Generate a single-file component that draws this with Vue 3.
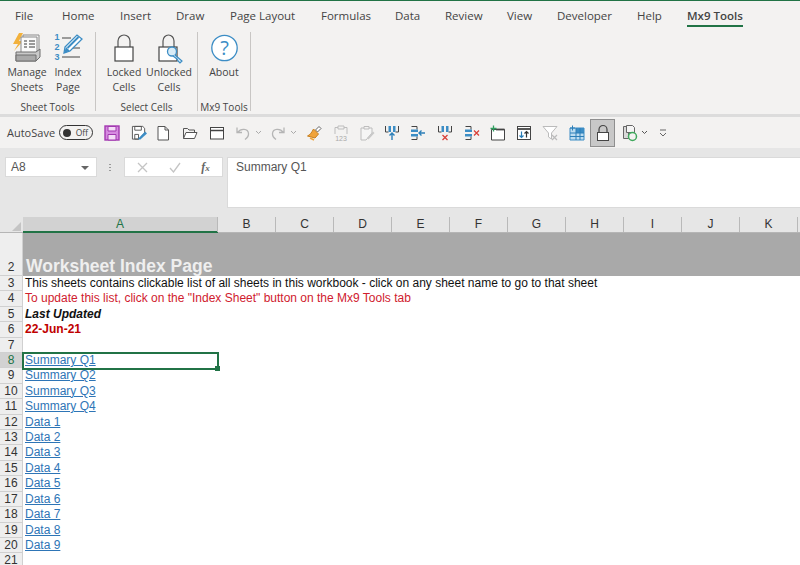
<template>
  <div class="excel">
    <!-- ribbon tabs -->
    <div class="tabs">
      <span v-for="t in tabs" :key="t" class="tab" :class="{ active: t === 'Mx9 Tools' }">{{ t }}</span>
    </div>

    <!-- ribbon -->
    <div class="ribbon">
      <div class="group g1">
        <div class="btns">
          <div class="big">
            <svg width="34" height="34" viewBox="0 0 34 34">
              <path d="M9 2 L3 13 L8 13 L4 20 L13 10 L9 10 L13 2Z" fill="#f2b13c" />
              <path d="M13 4h16v16H13z" fill="#f4f4f4" stroke="#8a8a8a" />
              <path d="M11 6h16v16H11z" fill="#fafafa" stroke="#8a8a8a" />
              <path d="M14 10h3M19 10h6M14 13h3M19 13h6M14 16h3M19 16h6" stroke="#7a7a7a" stroke-width="1.3" />
              <path d="M6 21h20l4-3v8l-4 4H6z" fill="#c9c9c9" stroke="#6e6e6e" />
              <path d="M6 24h20v6H6z" fill="#a9a9a9" stroke="#6e6e6e" />
            </svg>
            <span>Manage<br />Sheets</span>
          </div>
          <div class="big">
            <svg width="34" height="34" viewBox="0 0 34 34">
              <text x="3.500" y="9" class="num">1</text>
              <text x="3.500" y="19" class="num">2</text>
              <text x="3.500" y="29" class="num">3</text>
              <path d="M11 7h9M21 17h8M11 26h18" stroke="#444" stroke-width="1.100" />
              <path d="M14 16 L26 4 L31 8 L19 20 L13 22Z" fill="#fff" stroke="#3c8dc5" stroke-width="1.300" />
              <path d="M15 16 L13 22 L19 20Z" fill="#3c8dc5" />
              <path d="M16.500 17 L27.500 6" stroke="#3c8dc5" stroke-width="2" />
            </svg>
            <span>Index<br />Page</span>
          </div>
        </div>
        <div class="glabel">Sheet Tools</div>
      </div>

      <div class="group g2">
        <div class="btns">
          <div class="big lockb">
            <svg width="34" height="34" viewBox="0 0 34 34">
              <path d="M11 16 V10 a6 6 0 0 1 12 0 V16" fill="none" stroke="#555" stroke-width="1.200" />
              <rect x="8" y="16" width="18" height="14" fill="#fff" stroke="#444" stroke-width="1.200" />
            </svg>
            <span>Locked<br />Cells</span>
          </div>
          <div class="big lockb">
            <svg width="34" height="34" viewBox="0 0 34 34">
              <path d="M11 16 V10 a5.500 6 0 0 1 11 0 V16" fill="none" stroke="#555" stroke-width="1.200" />
              <rect x="7" y="16" width="18" height="14" fill="#fff" stroke="#444" stroke-width="1.200" />
              <circle cx="20" cy="20.500" r="4.500" fill="#d9ecf7" stroke="#3c8dc5" stroke-width="1.300" />
              <path d="M23 24 L30 30 L28 32 L26 30 L25 28 L21 25" fill="#d9ecf7" stroke="#3c8dc5" stroke-width="1.200" />
            </svg>
            <span>Unlocked<br />Cells</span>
          </div>
        </div>
        <div class="glabel">Select Cells</div>
      </div>

      <div class="group g3">
        <div class="btns">
          <div class="big about">
            <svg width="34" height="34" viewBox="0 0 34 34">
              <circle cx="17.500" cy="17" r="12.700" fill="#fff" stroke="#3c8dc5" stroke-width="1.300" />
              <text x="17.500" y="24" class="q">?</text>
            </svg>
            <span>About</span>
          </div>
        </div>
        <div class="glabel">Mx9 Tools</div>
      </div>
    </div>

    <!-- quick access toolbar -->
    <div class="qat">
      <span class="autosave">AutoSave</span>
      <span class="toggle"><i></i>Off</span>
      <div class="qicons">
        <!-- save -->
        <svg width="16" height="16" viewBox="0 0 16 16">
          <rect x="1" y="1" width="14" height="14" fill="#d68be0" stroke="#a238b0" stroke-width="1.400" />
          <path d="M4 1.500h8v4.500H4zM4 9.500h8V15H4z" fill="#f4dcf7" stroke="#a238b0" />
        </svg>
        <!-- save as -->
        <svg width="16" height="16" viewBox="0 0 17 17">
          <path d="M1.500 1.500h11l2 2v5l-6 6.500h-7z" fill="#fff" stroke="#555" />
          <path d="M4 1.500h7v4H4zM4 10h4v5H4z" fill="none" stroke="#555" />
          <path d="M8 14 L15 7 L17 9 L10 15.500 L8 15.500Z" fill="#3c8dc5" />
        </svg>
        <!-- new -->
        <svg width="16" height="16" viewBox="0 0 16 16">
          <path d="M3 1.500h7l3.500 3.500V15H3z" fill="#fff" stroke="#555" />
          <path d="M10 1.500V5h3.500" fill="none" stroke="#555" />
        </svg>
        <!-- open -->
        <svg width="16" height="16" viewBox="0 0 16 16">
          <path d="M1.500 13.500V3.500h4l1.500 1.500h5.500v2.500" fill="none" stroke="#555" />
          <path d="M1.500 13.500L4 7.500h11L12.500 13.500z" fill="#fff" stroke="#555" />
        </svg>
        <!-- folder tab -->
        <svg width="16" height="16" viewBox="0 0 16 16">
          <rect x="1.500" y="2.500" width="13" height="11.500" fill="#fff" stroke="#444" />
          <path d="M1.500 5.500h13" stroke="#444" stroke-width="1.500" />
        </svg>
        <!-- undo -->
        <svg width="16" height="16" viewBox="0 0 16 16">
          <path d="M2 2.500v5h5M2.500 7.500 C6 3 13 3.500 13.500 8.500 C13.800 11 12 13 10 14.500" fill="none" stroke="#b5b5b5" stroke-width="1.300" />
        </svg>
        <svg width="7" height="5" viewBox="0 0 7 5"><path d="M1 1l2.500 2.500L6 1" fill="none" stroke="#aaa" /></svg>
        <!-- redo -->
        <svg width="16" height="16" viewBox="0 0 16 16">
          <path d="M14 2.500v5H9M13.500 7.500 C10 3 3 3.500 2.500 8.500 C2.200 11 4 13 6 14.500" fill="none" stroke="#b5b5b5" stroke-width="1.300" />
        </svg>
        <svg width="7" height="5" viewBox="0 0 7 5"><path d="M1 1l2.500 2.500L6 1" fill="none" stroke="#aaa" /></svg>
        <!-- format painter -->
        <svg width="16" height="16" viewBox="0 0 16 16">
          <path d="M9.500 5 L13 1.500 L15 3.500 L11.500 7z" fill="#fff" stroke="#666" />
          <path d="M7.500 4 L12.500 9 L9 13 L1.500 11 C4 10 6 7 7.500 4z" fill="#f0a33a" stroke="#c77f1e" />
          <path d="M4 13 L8 15" stroke="#f0a33a" stroke-width="1.500" />
        </svg>
        <!-- paste values -->
        <svg width="16" height="18" viewBox="0 0 16 18">
          <path d="M2 3.500h12V10M2 3.500V10" fill="none" stroke="#bdbdbd" />
          <path d="M5 2h6v3H5z" fill="#f3f2f1" stroke="#bdbdbd" />
          <text x="8" y="16.500" class="mini">123</text>
        </svg>
        <!-- paste format -->
        <svg width="16" height="16" viewBox="0 0 16 16">
          <path d="M2 3h11v5l-6 7H2z" fill="#f5f5f5" stroke="#bdbdbd" />
          <path d="M5 1.500h5V4H5z" fill="#f3f2f1" stroke="#bdbdbd" />
          <path d="M8 13 L14 6.500 L15.500 8 L9.500 14.500z" fill="#c9c9c9" />
        </svg>
        <!-- insert cols -->
        <svg width="16" height="16" viewBox="0 0 16 16">
          <path d="M1.500 1v6h3M14.500 1v6h-3" fill="none" stroke="#444" />
          <path d="M4.500 1h2.500v6H4.500zM9 1h2.500v6H9z" fill="#3c8dc5" />
          <path d="M8 15V8M5.500 10.500L8 8l2.500 2.500" fill="none" stroke="#2c7fb8" stroke-width="1.400" />
        </svg>
        <!-- insert rows -->
        <svg width="16" height="16" viewBox="0 0 16 16">
          <path d="M1.500 1.500H7M1.500 14.500H7M7 1.500v3M7 14.500v-3" fill="none" stroke="#444" />
          <path d="M1 4.500h7v2.500H1zM1 9h7v2.500H1z" fill="#3c8dc5" />
          <path d="M15 8H9M11.500 5.500L9 8l2.500 2.500" fill="none" stroke="#2c7fb8" stroke-width="1.400" />
        </svg>
        <!-- delete cols -->
        <svg width="16" height="16" viewBox="0 0 16 16">
          <path d="M1.500 1v6h3M14.500 1v6h-3" fill="none" stroke="#444" />
          <path d="M4.500 1h2.500v6H4.500zM9 1h2.500v6H9z" fill="#3c8dc5" />
          <path d="M5.500 10l5 5M10.500 10l-5 5" stroke="#d8413a" stroke-width="1.300" />
        </svg>
        <!-- delete rows -->
        <svg width="16" height="16" viewBox="0 0 16 16">
          <path d="M1.500 1.500H7M1.500 14.500H7M7 1.500v3M7 14.500v-3" fill="none" stroke="#444" />
          <path d="M1 4.500h7v2.500H1zM1 9h7v2.500H1z" fill="#3c8dc5" />
          <path d="M10 5.500l5 5M15 5.500l-5 5" stroke="#d8413a" stroke-width="1.300" />
        </svg>
        <!-- new sheet -->
        <svg width="16" height="16" viewBox="0 0 16 16">
          <path d="M1.500 4.500h13V15h-13z" fill="#fff" stroke="#444" />
          <path d="M6 4.500h8.500" stroke="#444" stroke-width="1.800" />
          <path d="M3.500 0.500v6M0.500 3.500h6" stroke="#2f9e5f" stroke-width="1.300" />
        </svg>
        <!-- sort sheets -->
        <svg width="16" height="16" viewBox="0 0 16 16">
          <rect x="1.500" y="1.500" width="13" height="13" fill="#fff" stroke="#444" />
          <path d="M1.500 4h13" stroke="#444" stroke-width="1.800" />
          <path d="M5.500 6.500v6M3.500 10.500l2 2 2-2" fill="none" stroke="#2c7fb8" stroke-width="1.200" />
          <path d="M10.500 12.500v-6M8.500 8.500l2-2 2 2" fill="none" stroke="#333" stroke-width="1.200" />
        </svg>
        <!-- clear filter -->
        <svg width="16" height="16" viewBox="0 0 16 16">
          <path d="M1 1.500h14L9.500 8v6L6.500 12V8z" fill="#fff" stroke="#bbb" />
          <path d="M10 10l5 5M15 10l-5 5" stroke="#bbb" stroke-width="1.200" />
        </svg>
        <!-- table -->
        <svg width="16" height="16" viewBox="0 0 16 16">
          <path d="M1 3h14v12H1z" fill="#bcdcf0" stroke="#3c8dc5" />
          <path d="M7 3h8v5H7z" fill="#3c8dc5" />
          <path d="M1 8h14M1 11.500h14M7 3v12M11 3v12" stroke="#2c7fb8" />
          <path d="M3.500 0.500v5M1 3h5" stroke="#2c7fb8" />
        </svg>
        <!-- lock, pressed -->
        <span class="pressed">
          <svg width="16" height="18" viewBox="0 0 16 18">
            <path d="M4 8.500V5.500a4 4 0 0 1 8 0V8.500" fill="none" stroke="#444" stroke-width="1.200" />
            <rect x="2.500" y="8.500" width="11" height="8" fill="#fff" stroke="#444" />
          </svg>
        </span>
        <!-- copy refresh -->
        <svg width="16" height="18" viewBox="0 0 16 18">
          <path d="M1.500 2.500h5v12h-5z" fill="#d9d9d9" stroke="#666" />
          <path d="M4.500 1.500h6l2 2v5h-8z" fill="#f5f5f5" stroke="#666" />
          <circle cx="10.500" cy="12.500" r="4" fill="none" stroke="#3fa85c" stroke-width="1.500" />
        </svg>
        <svg width="7" height="5" viewBox="0 0 7 5"><path d="M1 1l2.500 2.500L6 1" fill="none" stroke="#555" /></svg>
        <svg width="8" height="8" viewBox="0 0 8 8"><path d="M1 1h6M1 4l3 3 3-3" fill="none" stroke="#666" /></svg>
      </div>
    </div>

    <!-- formula bar -->
    <div class="fbar">
      <div class="namebox">A8<i></i></div>
      <div class="dots"></div>
      <div class="fxbox">
        <svg width="11" height="11" viewBox="0 0 11 11"><path d="M1 1l9 9M10 1l-9 9" stroke="#c4c4c4" stroke-width="1.300" /></svg>
        <svg width="12" height="11" viewBox="0 0 12 11"><path d="M1 6l3.500 4L11 1" fill="none" stroke="#c4c4c4" stroke-width="1.300" /></svg>
        <span class="fx">f<small>x</small></span>
      </div>
      <div class="formula">Summary Q1</div>
    </div>

    <!-- sheet -->
    <div class="sheet">
      <div class="colhead">
        <div class="corner"><i></i></div>
        <div v-for="c in columns" :key="c" class="col" :class="{ sel: c === 'A' }">{{ c }}</div>
      </div>
      <div class="row title">
        <div class="rh">2</div>
        <div class="cell">Worksheet Index Page</div>
      </div>
      <div v-for="r in rows" :key="r.n" class="row">
        <div class="rh" :class="{ sel: r.n === 8 }">{{ r.n }}</div>
        <div class="cell" :class="r.cls">{{ r.text }}</div>
      </div>
      <div class="selection"><i></i></div>
    </div>
  </div>
</template>

<script setup>
const tabs = ['File', 'Home', 'Insert', 'Draw', 'Page Layout', 'Formulas', 'Data', 'Review', 'View', 'Developer', 'Help', 'Mx9 Tools']
const columns = ['A', 'B', 'C', 'D', 'E', 'F', 'G', 'H', 'I', 'J', 'K']

const rows = [
  { n: 3, text: 'This sheets contains clickable list of all sheets in this workbook - click on any sheet name to go to that sheet' },
  { n: 4, text: 'To update this list, click on the "Index Sheet" button on the Mx9 Tools tab', cls: 'red' },
  { n: 5, text: 'Last Updated', cls: 'bi' },
  { n: 6, text: '22-Jun-21', cls: 'date' },
  { n: 7, text: '' },
  { n: 8, text: 'Summary Q1', cls: 'link' },
  { n: 9, text: 'Summary Q2', cls: 'link' },
  { n: 10, text: 'Summary Q3', cls: 'link' },
  { n: 11, text: 'Summary Q4', cls: 'link' },
  { n: 12, text: 'Data 1', cls: 'link' },
  { n: 13, text: 'Data 2', cls: 'link' },
  { n: 14, text: 'Data 3', cls: 'link' },
  { n: 15, text: 'Data 4', cls: 'link' },
  { n: 16, text: 'Data 5', cls: 'link' },
  { n: 17, text: 'Data 6', cls: 'link' },
  { n: 18, text: 'Data 7', cls: 'link' },
  { n: 19, text: 'Data 8', cls: 'link' },
  { n: 20, text: 'Data 9', cls: 'link' },
  { n: 21, text: '' },
]
</script>

<style scoped>
.excel {
  width: 800px;
  height: 565px;
  overflow: hidden;
  background: #fff;
  font-family: "Open Sans", "Liberation Sans", sans-serif;
  color: #444;
  display: flex;
  flex-direction: column;
}

.excel > * {
  flex: none;
}

.tabs {
  height: 31px;
  box-sizing: border-box;
  border-top: 1px solid #217346;
  background: #f3f2f1;
  display: grid;
  grid-template-columns: 47px 58px 56px 54px 91px 74px 50px 62px 50px 80px 50px auto;
  padding-left: 15px;
  font-size: 11.5px;
  align-items: center;
}

.tab {
  line-height: 16px;
  justify-self: start;
}

.tab.active {
  font-weight: 600;
  border-bottom: 2px solid #217346;
  padding-bottom: 1px;
  margin-top: 3px;
}

.ribbon {
  height: 83px;
  background: #f3f2f1;
  display: flex;
  font-size: 10.5px;
}

.group {
  box-sizing: border-box;
  border-right: 1px solid #c8c6c4;
  margin: 1px 0 3px;
  display: flex;
  flex-direction: column;
  align-items: center;
}

.g1 { width: 96px; }
.g2 { width: 102px; }
.g3 { width: 53px; }

.btns {
  flex: 1;
  display: flex;
  justify-content: center;
  margin-top: -1px;
}

.big {
  width: 41px;
  display: flex;
  flex-direction: column;
  align-items: center;
  text-align: center;
  line-height: 14.5px;
}

.lockb { width: 45px; }
.about { width: 50px; }

.glabel {
  font-size: 10px;
  line-height: 13px;
  margin-bottom: -3px;
}

.num {
  font: bold 9px "Liberation Sans", sans-serif;
  fill: #3c8dc5;
}

.q {
  font: 20px "Open Sans", sans-serif;
  fill: #3c8dc5;
  text-anchor: middle;
}

.mini {
  font: 7px "Liberation Sans", sans-serif;
  fill: #aaa;
  text-anchor: middle;
}

.qat {
  height: 34px;
  box-sizing: border-box;
  background: #f3f2f1;
  border-top: 3px solid #dcdcdc;
  padding: 0 0 0 7px;
  display: flex;
  align-items: center;
  font-size: 11px;
}

.autosave {
  width: 52px;
}

.toggle {
  width: 34px;
  height: 15px;
  box-sizing: border-box;
  border: 1px solid #333;
  border-radius: 8px;
  font-size: 8.5px;
  line-height: 13px;
  text-align: right;
  padding-right: 4px;
  position: relative;
}

.toggle i {
  position: absolute;
  left: 3px;
  top: 2.5px;
  width: 8px;
  height: 8px;
  border-radius: 50%;
  background: #333;
}

.qicons {
  display: flex;
  align-items: center;
  margin-left: 11px;
}

.qicons > * { margin-left: 10px; flex: none; }
.qicons > :nth-child(1) { margin-left: 0; }
.qicons > :nth-child(2),
.qicons > :nth-child(4),
.qicons > :nth-child(5),
.qicons > :nth-child(11),
.qicons > :nth-child(15),
.qicons > :nth-child(16),
.qicons > :nth-child(20) { margin-left: 11px; }
.qicons > :nth-child(3) { margin-left: 8px; }
.qicons > :nth-child(13) { margin-left: 9px; }
.qicons > :nth-child(7),
.qicons > :nth-child(9) { margin-left: 3.5px; }
.qicons > :nth-child(8) { margin-left: 8.5px; }
.qicons > :nth-child(10) { margin-left: 9.5px; }
.qicons > :nth-child(21) { margin-left: 5px; }
.qicons > :nth-child(22) { margin-left: 7px; }
.qicons > :nth-child(23) { margin-left: 2.5px; }
.qicons > :nth-child(24) { margin-left: 11.5px; }

.pressed {
  width: 25px;
  height: 28px;
  box-sizing: border-box;
  background: #c8c8c8;
  border: 1px solid #8f8f8f;
  display: flex;
  align-items: center;
  justify-content: center;
}

.fbar {
  height: 69px;
  box-sizing: border-box;
  background: #e6e6e6;
  padding: 9px 0 0 5px;
  display: flex;
  align-items: flex-start;
  font-family: "Liberation Sans", sans-serif;
  font-size: 12px;
}

.namebox {
  width: 92px;
  height: 20px;
  box-sizing: border-box;
  background: #fff;
  border: 1px solid #dadada;
  padding-left: 5px;
  line-height: 18px;
  position: relative;
  color: #555;
}

.namebox i {
  position: absolute;
  right: 7px;
  top: 8px;
  border: 4px solid transparent;
  border-top-color: #666;
  border-bottom: 0;
}

.dots {
  width: 2px;
  height: 8px;
  margin: 6px 13px 0 12px;
  background: radial-gradient(circle, #999 1px, transparent 1px) 0 0 / 2px 3px;
}

.fxbox {
  width: 99px;
  height: 20px;
  box-sizing: border-box;
  background: #fff;
  border: 1px solid #dadada;
  display: flex;
  align-items: center;
  justify-content: space-around;
  padding: 0 2px;
  margin-right: 4px;
}

.fx {
  font: italic bold 12px "Liberation Serif", serif;
  color: #666;
}

.fx small {
  font-size: 9px;
}

.formula {
  flex: 1;
  height: 51px;
  box-sizing: border-box;
  background: #fff;
  border: 1px solid #dadada;
  border-right: 0;
  padding-left: 8px;
  line-height: 18px;
  color: #555;
}

.sheet {
  position: relative;
  font-family: "Liberation Sans", sans-serif;
  font-size: 12px;
  background: #fff;
}

.colhead {
  height: 15px;
  display: flex;
  background: #e6e6e6;
  color: #333;
  border-bottom: 1px solid #b5b5b5;
  box-sizing: content-box;
}

.corner {
  width: 23px;
  position: relative;
}

.corner i {
  position: absolute;
  right: 2px;
  bottom: 1px;
  border-left: 9px solid transparent;
  border-bottom: 9px solid #c4c4c4;
}

.col {
  width: 58px;
  flex: none;
  box-sizing: border-box;
  text-align: center;
  line-height: 15px;
  border-right: 1px solid #b9b9b9;
}

.col.sel {
  width: 195px;
  background: #d2d2d2;
  color: #217346;
  box-shadow: 0 1px 0 #217346, inset 0 -1px 0 #217346;
}

.row {
  display: flex;
  height: 15.42px;
}

.row.title {
  height: 43px;
  background: #a9a9a9;
}

.rh {
  width: 23px;
  flex: none;
  box-sizing: border-box;
  background: #eeeeee;
  border-bottom: 1px solid #d0d0d0;
  border-right: 1px solid #d0d0d0;
  color: #333;
  text-align: center;
  line-height: 15px;
}

.title .rh {
  display: flex;
  align-items: flex-end;
  justify-content: center;
}

.rh.sel {
  background: #d2d2d2;
  color: #217346;
}

.cell {
  flex: 1;
  padding-left: 2px;
  line-height: 15px;
  white-space: nowrap;
  color: #111;
}

.title .cell {
  font-size: 17.5px;
  font-weight: bold;
  color: #efefef;
  line-height: 20px;
  align-self: flex-end;
  padding-left: 3px;
}

.red { color: #d0202e; }
.bi { font-weight: bold; font-style: italic; }
.date { font-weight: bold; color: #c00000; }
.link { color: #2e75b6; text-decoration: underline; }

.selection {
  position: absolute;
  left: 22px;
  top: 135px;
  width: 197px;
  height: 18px;
  box-sizing: border-box;
  border: 2px solid #217346;
  pointer-events: none;
}

.selection i {
  position: absolute;
  right: -3px;
  bottom: -3px;
  width: 5px;
  height: 5px;
  background: #217346;
}
</style>
